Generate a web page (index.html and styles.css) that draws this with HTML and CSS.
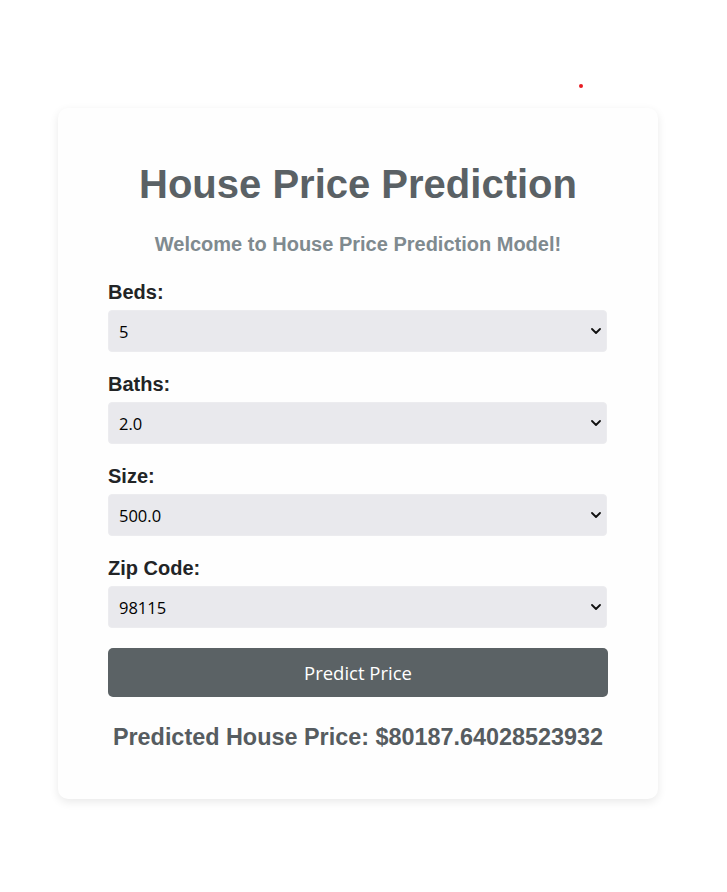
FILE: index.html
```html
<!DOCTYPE html>
<html lang="en">
<head>
<meta charset="utf-8">
<title>House Price Prediction</title>
<link rel="stylesheet" href="styles.css">
</head>
<body>
<span class="dot"></span>
<div class="card">
  <h1 class="title">House Price Prediction</h1>
  <p class="subtitle">Welcome to House Price Prediction Model!</p>
  <form class="form">
    <div class="field">
      <label class="label" for="beds">Beds:</label>
      <div class="select-wrap">
        <select class="select" id="beds"><option>5</option></select>
        <svg class="chevron" viewBox="0 0 10 6" width="10" height="6" aria-hidden="true"><path d="M1 1 L5 5 L9 1" fill="none" stroke="#111" stroke-width="1.8" stroke-linecap="round" stroke-linejoin="round"/></svg>
      </div>
    </div>
    <div class="field">
      <label class="label" for="baths">Baths:</label>
      <div class="select-wrap">
        <select class="select" id="baths"><option>2.0</option></select>
        <svg class="chevron" viewBox="0 0 10 6" width="10" height="6" aria-hidden="true"><path d="M1 1 L5 5 L9 1" fill="none" stroke="#111" stroke-width="1.8" stroke-linecap="round" stroke-linejoin="round"/></svg>
      </div>
    </div>
    <div class="field">
      <label class="label" for="size">Size:</label>
      <div class="select-wrap">
        <select class="select" id="size"><option>500.0</option></select>
        <svg class="chevron" viewBox="0 0 10 6" width="10" height="6" aria-hidden="true"><path d="M1 1 L5 5 L9 1" fill="none" stroke="#111" stroke-width="1.8" stroke-linecap="round" stroke-linejoin="round"/></svg>
      </div>
    </div>
    <div class="field field-last">
      <label class="label" for="zip">Zip Code:</label>
      <div class="select-wrap">
        <select class="select" id="zip"><option>98115</option></select>
        <svg class="chevron" viewBox="0 0 10 6" width="10" height="6" aria-hidden="true"><path d="M1 1 L5 5 L9 1" fill="none" stroke="#111" stroke-width="1.8" stroke-linecap="round" stroke-linejoin="round"/></svg>
      </div>
    </div>
    <button class="button" type="button">Predict Price</button>
  </form>
  <p class="result">Predicted House Price: $80187.64028523932</p>
</div>
</body>
</html>
```
FILE: styles.css
```css
html, body {
  margin: 0;
  background: #ffffff;
}
body {
  padding: 108px 0 0 58px;
  font-family: "Liberation Sans", Arial, sans-serif;
  position: relative;
  min-height: 892px;
  box-sizing: border-box;
}
.dot {
  position: absolute;
  left: 579px;
  top: 84px;
  width: 4px;
  height: 4px;
  border-radius: 50%;
  background: #e81c23;
}
.card {
  width: 600px;
  box-sizing: border-box;
  padding: 53px 50px 48px;
  background: #fefefe;
  border-radius: 10px;
  box-shadow: 0 3px 10px rgba(0, 0, 0, 0.09);
}
.title {
  margin: 0;
  font-size: 40px;
  line-height: 46px;
  font-weight: bold;
  color: #5a6165;
  text-align: center;
}
.subtitle {
  margin: 26px 0 0;
  font-size: 20px;
  line-height: 23px;
  font-weight: bold;
  color: #7f8a8f;
  text-align: center;
}
.form {
  margin-top: 25px;
  display: flex;
  flex-direction: column;
}
.field {
  display: flex;
  flex-direction: column;
  margin-bottom: 21px;
}
.field-last {
  margin-bottom: 20px;
}
.label {
  font-size: 20px;
  line-height: 23px;
  font-weight: bold;
  color: #222426;
  margin-bottom: 6px;
}
.select-wrap {
  position: relative;
  width: 499px;
  height: 42px;
}
.select {
  -webkit-appearance: none;
  appearance: none;
  display: block;
  height: 42px;
  width: 499px;
  margin: 0;
  padding: 0 10px;
  border: 1px solid #ececef;
  border-radius: 4px;
  background-color: #e9e9ed;
  color: #000;
  font-family: "Open Sans", sans-serif;
  font-size: 16.5px;
}
.chevron {
  position: absolute;
  right: 6px;
  top: 18px;
  pointer-events: none;
}
.button {
  height: 49px;
  width: 500px;
  margin: 0;
  border: none;
  border-radius: 5px;
  background: #5b6265;
  color: #ffffff;
  font-family: "Open Sans", sans-serif;
  font-size: 18.5px;
  cursor: pointer;
}
.result {
  margin: 27px 0 0;
  font-size: 23.4px;
  line-height: 27px;
  font-weight: bold;
  color: #565c60;
  text-align: center;
}
```
